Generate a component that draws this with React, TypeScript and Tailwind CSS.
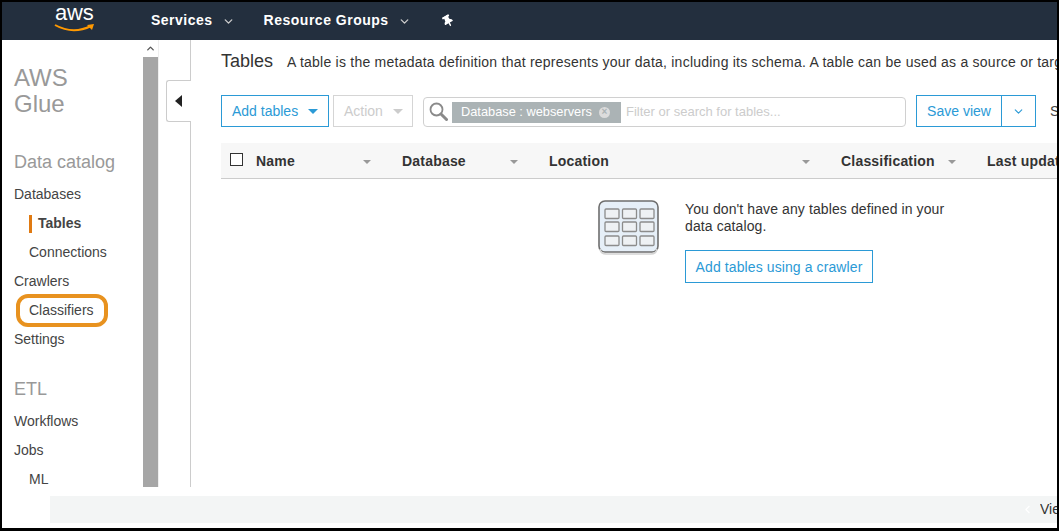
import { ChevronDown, ChevronUp, ChevronLeft } from 'lucide-react';
import { FaThumbtack } from 'react-icons/fa';

function SortCaret({ className = '' }: { className?: string }) {
  return <span className={`w-0 h-0 border-x-[4px] border-x-transparent border-t-[4px] border-t-[#999] ${className}`} />;
}

function SearchGlass() {
  return (
    <svg width="19" height="20" viewBox="0 0 19 20" className="shrink-0 ml-[1px]">
      <circle cx="7.5" cy="7.5" r="6" fill="none" stroke="#8a8a8a" strokeWidth="1.8" />
      <path d="M12 12 L17.5 17.5" stroke="#8a8a8a" strokeWidth="3" strokeLinecap="round" />
    </svg>
  );
}

function TableIcon() {
  const xs = [7, 24.5, 42];
  const ys = [9, 22, 36];
  return (
    <svg width="62" height="56" viewBox="0 0 62 56" className="shrink-0">
      <rect x="1" y="1" width="59" height="51" rx="6" fill="#e6eff8" stroke="#6e6e6e" strokeWidth="1.6" />
      <path d="M2 49 Q3 54 8 54 L53 54 Q58 54 59 49" fill="none" stroke="#d4d4d4" strokeWidth="1.5" />
      {ys.map(y => xs.map(x => (
        <rect key={`${x}-${y}`} x={x} y={y} width="14" height="9.5" rx="1" fill="#eef1f4" stroke="#8c8c8c" strokeWidth="1.3" />
      )))}
    </svg>
  );
}

function NavItem({ label, indent, active }: { label: string; indent?: boolean; active?: boolean }) {
  return (
    <div className={`h-[29px] flex items-center text-[14px] ${indent ? 'pl-[15px]' : ''}`}>
      {active ? (
        <span className="border-l-[3px] border-[#e07a12] pl-[6px] h-[18px] leading-[16px] font-bold text-[#444]">{label}</span>
      ) : (
        <span className="text-[#444]">{label}</span>
      )}
    </div>
  );
}

export default function App() {
  return (
    <div
      className="w-[1059px] h-[531px] flex flex-col overflow-hidden bg-white border-t-2 border-l-2 border-r-2 border-b-[3px] border-black"
      style={{ fontFamily: '"Liberation Sans", Arial, sans-serif' }}
    >
      {/* Top nav */}
      <div className="h-[38px] shrink-0 bg-[#232f3e] flex items-center text-white text-[14px] font-bold tracking-[0.5px]">
        <div className="w-[149px] shrink-0 relative h-full">
          <span className="absolute left-[53px] top-[-2px] text-[22px] leading-[26px] font-normal tracking-[-0.2px]">aws</span>
          <svg width="42" height="12" viewBox="0 0 42 12" className="absolute left-[52px] top-[21px]">
            <path d="M1 2 Q19 12 37 3" fill="none" stroke="#f90" strokeWidth="2" />
            <path d="M33 2 L40 1 L38 7 Z" fill="#f90" />
          </svg>
        </div>
        <span className="pb-[2px]">Services</span>
        <ChevronDown size={13} strokeWidth={2.5} className="ml-[9px] text-[#ccc]" />
        <span className="ml-[29px] pb-[2px]">Resource Groups</span>
        <ChevronDown size={13} strokeWidth={2.5} className="ml-[9px] text-[#ccc]" />
        <FaThumbtack size={12} className="ml-[31px] -rotate-[30deg]" />
      </div>

      {/* Body */}
      <div className="h-[447px] shrink-0 flex overflow-hidden">
        <div className="w-[141px] shrink-0 pl-[12px] overflow-hidden">
          <div className="pt-[25px] text-[24px] leading-[26px] text-[#999]">AWS<br />Glue</div>
          <div className="mt-[33px] text-[18px] leading-[24px] text-[#999]">Data catalog</div>
          <div className="mt-[6px]">
            <NavItem label="Databases" />
            <NavItem label="Tables" indent active />
            <NavItem label="Connections" indent />
            <NavItem label="Crawlers" />
            <NavItem label="Classifiers" indent />
            <NavItem label="Settings" />
          </div>
          <div className="mt-[23px] text-[18px] leading-[24px] text-[#999]">ETL</div>
          <div className="mt-[6px]">
            <NavItem label="Workflows" />
            <NavItem label="Jobs" />
            <NavItem label="ML" indent />
          </div>
        </div>

        {/* Scrollbar */}
        <div className="w-[15px] shrink-0 flex flex-col">
          <div className="h-[17px] flex items-center justify-center">
            <ChevronUp size={11} strokeWidth={3} className="text-[#555]" />
          </div>
          <div className="flex-1 bg-[#a6a6a6]" />
        </div>
        <div className="w-px shrink-0 bg-[#efefef]" />

        {/* Collapse gutter */}
        <div className="w-[31px] shrink-0 border-r border-[#ccc] relative box-content">
          <div className="absolute left-[7px] top-[40px] w-[25px] h-[42px] bg-white border border-r-0 border-[#ccc] rounded-l-[3px] flex items-center pl-[8px]">
            <span className="w-0 h-0 border-y-[6px] border-y-transparent border-r-[7px] border-r-[#222]" />
          </div>
        </div>

        {/* Main */}
        <div className="flex-1 min-w-0 overflow-hidden pl-[30px]">
          <div className="h-[43px] pt-[8px] flex items-baseline whitespace-nowrap text-[#333]">
            <span className="text-[18px] leading-[26px] mr-[14px]">Tables</span>
            <span className="text-[14px] tracking-[0.235px]">A table is the metadata definition that represents your data, including its schema. A table can be used as a source or target in a job definition.</span>
          </div>

          <div className="mt-[12px] h-[32px] w-[1000px] flex items-stretch text-[14px]">
            <div className="w-[108px] border border-[#2b9ad6] text-[#2b9ad6] flex items-center pl-[10px]">
              Add tables
              <span className="ml-[10px] w-0 h-0 border-x-[5px] border-x-transparent border-t-[5px] border-t-[#2b9ad6]" />
            </div>
            <div className="ml-[4px] w-[80px] border border-[#d5d5d5] text-[#ccc] flex items-center pl-[10px]">
              Action
              <span className="ml-[10px] w-0 h-0 border-x-[5px] border-x-transparent border-t-[5px] border-t-[#ccc]" />
            </div>
            <div className="ml-[10px] mt-[2px] w-[483px] border border-[#d0d0d0] rounded-[4px] flex items-center pl-[4px]">
              <SearchGlass />
              <div className="ml-[4px] h-[21px] w-[169px] bg-[#abb3b5] text-white text-[12.8px] flex items-center pl-[9px] whitespace-nowrap shrink-0">
                Database : webservers
                <span className="ml-[7px] w-[11px] h-[11px] rounded-full bg-[#dcdcdc] text-[#abb3b5] flex items-center justify-center text-[10px] leading-none font-bold">×</span>
              </div>
              <span className="ml-[5px] text-[#ccc] text-[13px] whitespace-nowrap">Filter or search for tables...</span>
            </div>
            <div className="ml-[10px] w-[86px] border border-[#2b9ad6] text-[#2b9ad6] flex items-center justify-center">Save view</div>
            <div className="w-[35px] -ml-px border border-[#2b9ad6] text-[#2b9ad6] flex items-center justify-center">
              <ChevronDown size={13} strokeWidth={2} />
            </div>
            <span className="ml-[14px] self-center text-[#444]">Show</span>
          </div>

          {/* Table head */}
          <div className="mt-[16px] h-[36px] pt-[2px] w-[1000px] bg-[#f7f7f7] border-b border-[#ccc] flex items-center text-[14px] font-bold text-[#333] whitespace-nowrap tracking-[0.2px]">
            <span className="ml-[9px] -mt-[4px] w-[13px] h-[13px] border border-[#333] bg-white shrink-0" />
            <span className="ml-[13px] w-[107px]">Name</span>
            <SortCaret />
            <span className="ml-[31px] w-[108px]">Database</span>
            <SortCaret />
            <span className="ml-[31px] w-[253px]">Location</span>
            <SortCaret />
            <span className="ml-[31px] w-[107px]">Classification</span>
            <SortCaret />
            <span className="ml-[31px]">Last updated</span>
          </div>

          {/* Empty state */}
          <div className="mt-[21px] ml-[377px] flex">
            <TableIcon />
            <div className="ml-[25px] w-[270px]">
              <p className="pt-[1px] text-[14px] leading-[17px] text-[#333] tracking-[0.1px]">You don't have any tables defined in your data catalog.</p>
              <div className="mt-[15px] pt-[1px] w-[188px] h-[33px] border border-[#2b9ad6] text-[#2b9ad6] text-[14px] tracking-[0.1px] flex items-center justify-center">Add tables using a crawler</div>
            </div>
          </div>
        </div>
      </div>

      {/* Footer */}
      <div className="mt-[9px] ml-[48px] h-[27px] shrink-0 bg-[#f3f5f5] flex items-center justify-end text-[14px] overflow-hidden">
        <ChevronLeft size={13} className="text-white mr-[6px]" />
        <span className="w-[17px] overflow-hidden whitespace-nowrap text-[#333]">View</span>
      </div>

      {/* Hand-drawn highlight */}
      <div className="absolute left-[16px] top-[294px] w-[92px] h-[33px] border-[4px] border-[#e8921f] rounded-[12px]" />
    </div>
  );
}
